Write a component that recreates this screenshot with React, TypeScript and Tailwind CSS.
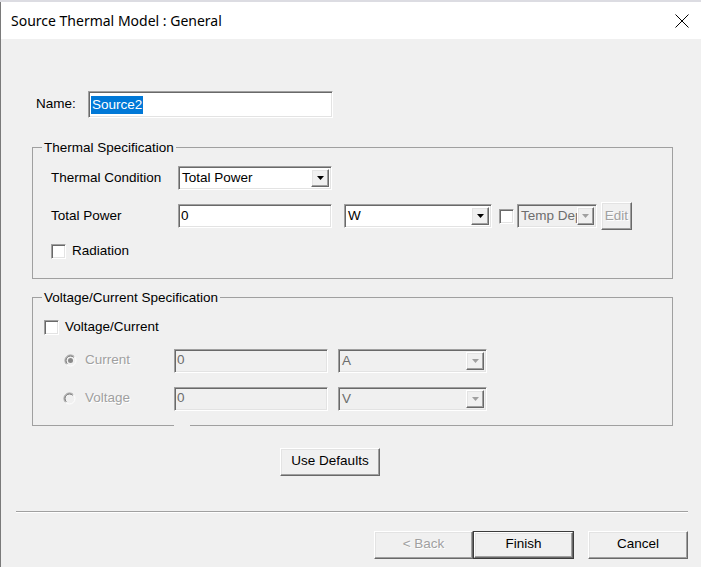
import React from 'react';

const sunken =
  'border border-t-[#a0a0a0] border-l-[#a0a0a0] border-r-white border-b-white shadow-[inset_1px_1px_0_#696969,inset_-1px_-1px_0_#e3e3e3]';
const raised =
  'border border-t-white border-l-white border-r-[#696969] border-b-[#696969] shadow-[inset_-1px_-1px_0_#a0a0a0,inset_1px_1px_0_#e3e3e3] bg-[#f0f0f0]';
const disabledText = 'text-[#a0a0a0] [text-shadow:1px_1px_0_#fff]';

function Arrow({ disabled = false }: { disabled?: boolean }) {
  return (
    <svg width="7" height="4" viewBox="0 0 7 4">
      <path d="M0 0h7L3.5 4z" fill={disabled ? '#a0a0a0' : '#000'} />
    </svg>
  );
}

function Select({
  value,
  width,
  disabled = false,
  btn = 'w-[18px]',
}: {
  value: string;
  width: string;
  disabled?: boolean;
  btn?: string;
}) {
  return (
    <div
      className={`${sunken} ${width} h-[24px] flex items-stretch p-[2px] ${
        disabled ? 'bg-[#f0f0f0] text-[#6d6d6d]' : 'bg-white'
      }`}
    >
      <div className="flex-1 overflow-hidden whitespace-nowrap pl-[1px] leading-[18px]">{value}</div>
      <div className={`${raised} ${btn} flex items-center justify-center`}>
        <Arrow disabled={disabled} />
      </div>
    </div>
  );
}

function TextBox({ value, width, disabled = false }: { value: string; width: string; disabled?: boolean }) {
  return (
    <div
      className={`${sunken} ${width} h-[24px] flex items-center pl-[2px] ${
        disabled ? 'bg-[#f0f0f0] text-[#6d6d6d]' : 'bg-white'
      }`}
    >
      {value}
    </div>
  );
}

function Checkbox() {
  return <div className={`${sunken} w-[15px] h-[15px] bg-white shrink-0`} />;
}

function Radio({ checked = false }: { checked?: boolean }) {
  return (
    <svg width="13" height="13" viewBox="0 0 13 13" className="shrink-0">
      <circle cx="6.5" cy="6.5" r="5.5" fill="#f0f0f0" />
      <path d="M2.6 10.4A5.5 5.5 0 0 1 10.4 2.6" stroke="#9a9a9a" fill="none" />
      <path d="M3.3 9.7A4.5 4.5 0 0 1 9.7 3.3" stroke="#6d6d6d" fill="none" />
      <path d="M10.4 2.6A5.5 5.5 0 0 1 2.6 10.4" stroke="#fff" fill="none" />
      {checked && <circle cx="6.5" cy="6.5" r="2.5" fill="#8a8a8a" />}
    </svg>
  );
}

function Button({
  label,
  width,
  disabled = false,
  isDefault = false,
}: {
  label: string;
  width: string;
  disabled?: boolean;
  isDefault?: boolean;
}) {
  return (
    <div className={`${width} h-[28px] ${isDefault ? 'border border-[#3c3c3c]' : ''}`}>
      <div className={`${raised} h-full flex items-center justify-center ${disabled ? disabledText : ''}`}>
        {label}
      </div>
    </div>
  );
}

export default function App() {
  return (
    <div className="w-[701px] h-[567px] overflow-hidden bg-[#f0f0f0] font-['Liberation_Sans',Arial,sans-serif] text-[13.5px] text-black">
      <div className="h-[2px] bg-[#dcdce2]" />
      <div className="border-l border-[#7a7a7a] h-[565px] flex flex-col">
        {/* Title bar */}
        <div className="h-[37px] bg-white flex items-center justify-between pl-[10px] pr-[12px]">
          <span className="font-['Noto_Sans',sans-serif] text-[14px] text-black">Source Thermal Model : General</span>
          <svg width="14" height="14" viewBox="0 0 14 14">
            <path d="M0.5 0.5l13 13M13.5 0.5l-13 13" stroke="#000" strokeWidth="1" />
          </svg>
        </div>

        {/* Body */}
        <div className="flex flex-col">
          <div className="mt-[52px] flex items-center">
            <span className="ml-[35px] w-[52px]">Name:</span>
            <div className={`${sunken} w-[245px] h-[27px] bg-white flex items-center pl-[2px]`}>
              <span className="bg-[#0078d7] text-white px-[1px] leading-[18px]">Source2</span>
            </div>
          </div>

          {/* Thermal Specification */}
          <fieldset className="ml-[31px] w-[641px] mt-[22px] border border-[#a0a0a0]">
            <legend className="ml-[9px] px-[2px] leading-[15px]">Thermal Specification</legend>
            <div className="pl-[18px] pb-[17px]">
              <div className="mt-[11px] flex items-center">
                <span className="w-[127px]">Thermal Condition</span>
                <Select value="Total Power" width="w-[154px]" />
              </div>
              <div className="mt-[12px] flex items-center">
                <span className="w-[127px]">Total Power</span>
                <TextBox value="0" width="w-[154px]" />
                <div className="ml-[12px]">
                  <Select value="W" width="w-[148px]" />
                </div>
                <div className="ml-[7px]">
                  <Checkbox />
                </div>
                <div className="ml-[3px]">
                  <Select value="Temp Dep" width="w-[80px]" btn="w-[17px]" disabled />
                </div>
                <div className="ml-[4px]">
                  <Button label="Edit" width="w-[31px]" disabled />
                </div>
              </div>
              <div className="mt-[11px] flex items-center">
                <Checkbox />
                <span className="ml-[6px]">Radiation</span>
              </div>
            </div>
          </fieldset>

          {/* Voltage/Current Specification */}
          <fieldset className="relative ml-[31px] w-[641px] mt-[11px] border border-[#a0a0a0]">
            <legend className="ml-[9px] px-[2px] leading-[15px]">Voltage/Current Specification</legend>
            <div className="pl-[11px] pb-[14px]">
              <div className="mt-[12px] flex items-center">
                <Checkbox />
                <span className="ml-[6px]">Voltage/Current</span>
              </div>
              <div className="mt-[11px] flex items-center">
                <div className="ml-[20px] w-[110px] flex items-center">
                  <Radio checked />
                  <span className={`ml-[8px] ${disabledText}`}>Current</span>
                </div>
                <TextBox value="0" width="w-[154px]" disabled />
                <div className="ml-[10px]">
                  <Select value="A" width="w-[149px]" disabled />
                </div>
              </div>
              <div className="mt-[14px] flex items-center">
                <div className="ml-[19px] w-[111px] flex items-center">
                  <Radio />
                  <span className={`ml-[9px] ${disabledText}`}>Voltage</span>
                </div>
                <TextBox value="0" width="w-[154px]" disabled />
                <div className="ml-[10px]">
                  <Select value="V" width="w-[149px]" disabled />
                </div>
              </div>
            </div>
            <span className="absolute left-[141px] -bottom-[1px] w-[16px] h-[1px] bg-[#f0f0f0]" />
          </fieldset>

          <div className="mt-[22px] ml-[279px]">
            <Button label="Use Defaults" width="w-[100px]" />
          </div>

          <div className="mt-[35px] ml-[15px] w-[672px] h-[2px] border-t border-[#a0a0a0] bg-white" />

          <div className="mt-[18px] ml-[373px] flex">
            <Button label="< Back" width="w-[99px]" disabled />
            <Button label="Finish" width="w-[101px]" isDefault />
            <div className="ml-[14px]">
              <Button label="Cancel" width="w-[100px]" />
            </div>
          </div>
        </div>
      </div>
    </div>
  );
}
